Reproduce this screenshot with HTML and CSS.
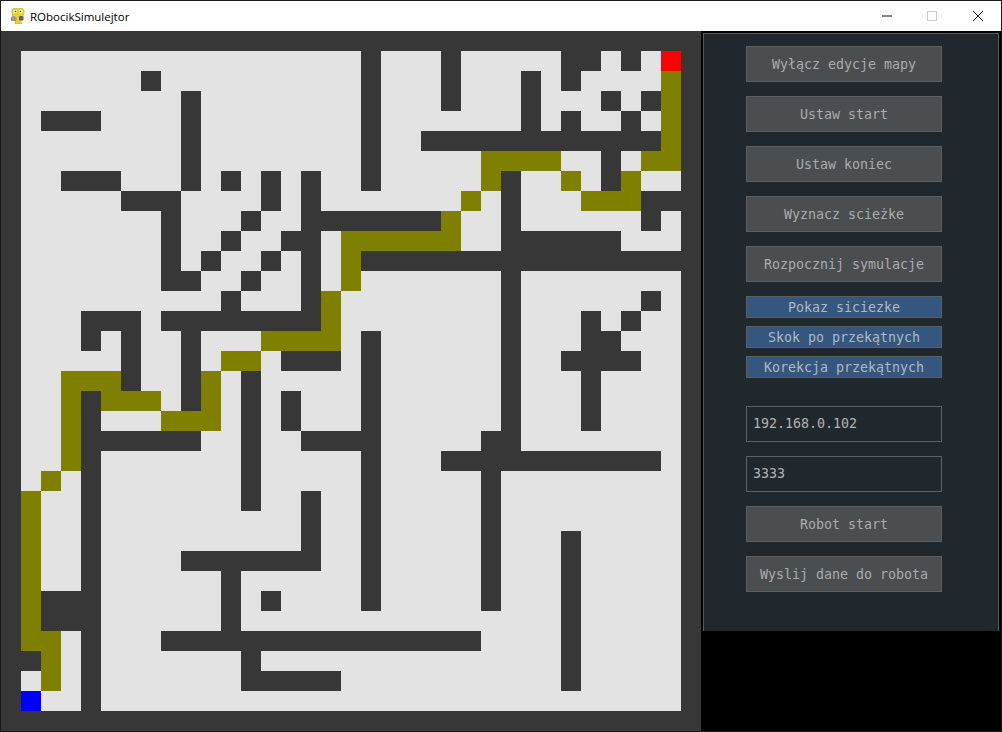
FILE: index.html
```html
<!DOCTYPE html>
<html lang="pl">
<head>
    <meta charset="UTF-8">
    <meta name="viewport" content="width=device-width, initial-scale=1.0">
    <title>RObocikSimulejtor</title>
    <link rel="stylesheet" href="styles.css">
</head>
<body>
    <div class="window">
        <div class="titlebar">
            <svg class="app-icon" viewBox="0 0 16 16" width="16" height="16">
                <path d="M2 5C1 2 3 0 5 0c1 0 2 .5 3 1 1-.5 2-1 3-1 2 0 3.500 2 3 5-.5 2-1 3-2 4l-1 3 .5 4H5l.5-3C3 11 2.500 8 2 5z" fill="#edd321" stroke="#a08c1e" stroke-width=".5"/>
                <rect x="1" y="8.500" width="5.500" height="4.500" rx="1" fill="#9a9a92"/>
                <rect x="9" y="8" width="4.500" height="4.500" rx="1" fill="#6a5d55"/>
                <circle cx="5" cy="3.500" r="2" fill="#fff6b0"/>
                <circle cx="11" cy="3.500" r="2" fill="#fff6b0"/>
                <circle cx="5.500" cy="3.500" r=".8" fill="#3a3a3a"/>
                <circle cx="10.500" cy="3.500" r=".8" fill="#3a3a3a"/>
            </svg>
            <span class="app-title">RObocikSimulejtor</span>
            <div class="win-controls">
                <svg class="win-btn" viewBox="0 0 46 30" width="46" height="30"><path d="M18 15h10" stroke="#111" fill="none"/></svg>
                <svg class="win-btn" viewBox="0 0 46 30" width="46" height="30"><rect x="17.500" y="10.500" width="9" height="9" stroke="#ccc" fill="none"/></svg>
                <svg class="win-btn" viewBox="0 0 46 30" width="46" height="30"><path d="M17 10l10 10M27 10l-10 10" stroke="#111" fill="none"/></svg>
            </div>
        </div>
        <div class="client">
            <div class="map" id="map"></div>
            <div class="panel">
                <button class="btn">Wyłącz edycje mapy</button>
                <button class="btn">Ustaw start</button>
                <button class="btn">Ustaw koniec</button>
                <button class="btn">Wyznacz scieżke</button>
                <button class="btn">Rozpocznij symulacje</button>
                <div class="toggles">
                    <button class="btn toggle">Pokaz siciezke</button>
                    <button class="btn toggle">Skok po przekątnych</button>
                    <button class="btn toggle">Korekcja przekątnych</button>
                </div>
                <input class="field" type="text" value="192.168.0.102">
                <input class="field" type="text" value="3333">
                <button class="btn">Robot start</button>
                <button class="btn">Wyslij dane do robota</button>
            </div>
        </div>
    </div>
    <script src="map.js"></script>
</body>
</html>
```

FILE: styles.css
```css
* {
    box-sizing: border-box;
}
body {
    margin: 0;
    background: #000;
    overflow: hidden;
}
.window {
    width: 1002px;
    height: 732px;
    border: 1px solid #1a1a1a;
    background: #000;
}
.titlebar {
    height: 30px;
    display: flex;
    align-items: center;
    background: #fff;
    padding-left: 9px;
}
.app-icon {
    flex: none;
}
.app-title {
    margin-left: 4px;
    font: 11.5px "Open Sans", "Liberation Sans", sans-serif;
    color: #000;
}
.win-controls {
    margin-left: auto;
    display: flex;
    margin-right: -1px;
}
.win-btn {
    display: block;
}
.client {
    display: flex;
    height: 700px;
}
.map {
    flex: none;
    display: grid;
    grid-template-columns: repeat(35, 20px);
    grid-auto-rows: 20px;
    width: 700px;
    height: 700px;
    background: #e3e3e3;
}
.wall {
    background: #373737;
}
.route {
    background: #808000;
}
.start {
    background: #00f;
}
.end {
    background: #f00;
}
.panel {
    width: 296px;
    height: 598px;
    margin: 2px 0 0 2px;
    padding: 12px 0 0 42px;
    display: flex;
    flex-direction: column;
    gap: 14px;
    background: #21282d;
    border: 1px solid #565a5d;
    border-bottom: 0;
}
.btn {
    flex: none;
    width: 196px;
    height: 36px;
    padding: 0;
    background: #4a4e51;
    border: 1px solid #5b5f62;
    border-radius: 0;
    color: #a9acac;
    font: 13.3px "DejaVu Sans Mono", "Liberation Mono", monospace;
}
.toggles {
    display: flex;
    flex-direction: column;
    gap: 8px;
    margin-bottom: 14px;
}
.toggle {
    height: 22px;
    background: #35567f;
    color: #b0b8c0;
}
.field {
    flex: none;
    width: 196px;
    height: 36px;
    padding: 0 0 2px 6px;
    background: #21282d;
    border: 1px solid #5d6164;
    border-radius: 0;
    outline: none;
    color: #b0b3b3;
    font: 13.3px "DejaVu Sans Mono", "Liberation Mono", monospace;
}
```

FILE: map.js
```js
// # sciana, o sciezka, S start, E koniec
const rows = [
    "###################################",
    "#.................#...#.....##.#.E#",
    "#......#..........#...#...#.#....o#",
    "#........#........#...#...#...#.#o#",
    "#.###....#........#.......#.#..#.o#",
    "#........#........#..############o#",
    "#........#........#.....oooo..#.oo#",
    "#..###...#.#.#.#..#.....o#..o.#o..#",
    "#.....###....#.#.......o.#...ooo###",
    "#.......#...#..#######o..#......#.#",
    "#.......#..#..##.oooooo..######...#",
    "#.......#.#..#.#.o#################",
    "#.......##..#..#.o.......#........#",
    "#..........#...#o........#......#.#",
    "#...###.########o........#...#.#..#",
    "#...#.#..#...oooo.#......#...##...#",
    "#.....#..#.oo.###.#......#..####..#",
    "#..ooo#..#o.#.....#......#...#....#",
    "#..o#ooo.#o.#.#...#......#...#....#",
    "#..o#...ooo.#.#...#......#...#....#",
    "#..o######..#..####.....##........#",
    "#..o#.......#.....#...###########.#",
    "#.o.#.......#.....#.....#.........#",
    "#o..#.......#..#..#.....#.........#",
    "#o..#..........#..#.....#.........#",
    "#o..#..........#..#.....#...#.....#",
    "#o..#....#######..#.....#...#.....#",
    "#o..#......#......#.....#...#.....#",
    "#o###......#.#....#.....#...#.....#",
    "#o###......#................#.....#",
    "#oo.#...################....#.....#",
    "##o.#.......#...............#.....#",
    "#.o.#.......#####...........#.....#",
    "#S..#.............................#",
    "###################################"
];
const names = { "#": "wall", "o": "route", "S": "start", "E": "end" };
const map = document.getElementById("map");

for (let row of rows) {
    for (let ch of row) {
        let cell = document.createElement("div");
        if (names[ch]) cell.className = names[ch];
        map.appendChild(cell);
    }
}
```
